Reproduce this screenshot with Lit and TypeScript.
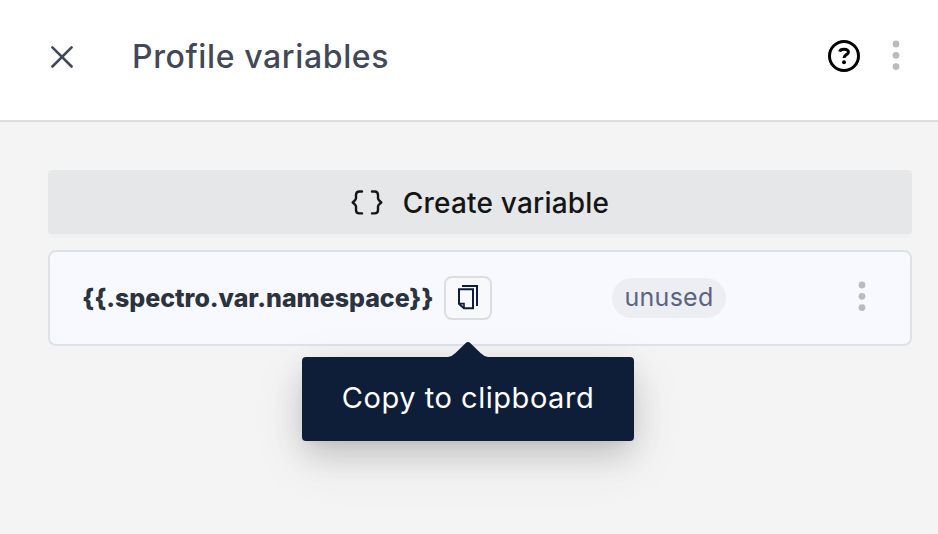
import { LitElement, html, css, svg } from "lit";
import { customElement } from "lit/decorators.js";

const dots = svg`<circle cx="5" cy="5" r="3.4"/><circle cx="5" cy="16.3" r="3.4"/><circle cx="5" cy="27.6" r="3.4"/>`;

@customElement("app-root")
export class AppRoot extends LitElement {
  static styles = css`
    :host {
      display: block;
      height: 534px;
      overflow: hidden;
      background: #f4f4f4;
      font-family: Inter, "Liberation Sans", sans-serif;
    }
    * { box-sizing: border-box; }
    svg { display: block; flex: none; overflow: visible; }
    span { white-space: nowrap; }
    header {
      display: flex;
      align-items: center;
      height: 122px;
      padding: 0 37px 8px 50px;
      background: #fff;
      border-bottom: 2px solid #dcdcdc;
    }
    h1 {
      flex: 1;
      margin: 0 0 0 57px;
      padding-top: 2px;
      color: #414857;
      font-size: 32px;
      font-weight: 500;
      line-height: 48px;
      letter-spacing: 0.62px;
      white-space: nowrap;
    }
    .more { fill: #bbb; }
    .head-more { margin-left: 31px; }
    main { padding: 48px 26px 0 48px; }
    .create {
      display: flex;
      align-items: center;
      justify-content: center;
      gap: 20px;
      width: 100%;
      height: 64px;
      padding: 0;
      border: 0;
      border-radius: 4px;
      background: #e6e7e8;
      box-shadow: 0 4px 0 rgba(0, 0, 0, 0.016);
      color: #151515;
      font: 500 28px/44px Inter, sans-serif;
      letter-spacing: 0.2px;
    }
    .create span { padding-top: 2px; }
    .row {
      display: flex;
      align-items: center;
      height: 96px;
      margin-top: 16px;
      padding: 0 43px 0 32px;
      border: 2px solid #dfe1e8;
      border-radius: 8px;
      background: #f8f9fe;
    }
    .row > .more { margin-bottom: 2px; }
    .name {
      width: 362px;
      color: #2b333e;
      font-size: 25px;
      font-weight: 800;
      line-height: 36px;
      letter-spacing: -0.03px;
    }
    .copy {
      position: relative;
      display: flex;
      align-items: center;
      justify-content: center;
      width: 48px;
      height: 44px;
      border: 2px solid #dcdedf;
      border-radius: 8px;
      background: #f8f9fb;
    }
    .tag {
      display: flex;
      justify-content: center;
      width: 114px;
      height: 40px;
      margin: 0 auto 0 120px;
      border-radius: 20px;
      background: #edeef3;
      color: #596383;
      font-size: 25px;
      line-height: 38px;
      letter-spacing: 0.3px;
    }
    .tip {
      position: absolute;
      top: 79px;
      left: 50%;
      display: flex;
      justify-content: center;
      width: 332px;
      height: 84px;
      transform: translateX(-50%);
      border-radius: 4px;
      background: #0f1e38;
      box-shadow: 0 12px 32px rgba(0, 0, 0, 0.08), 0 6px 12px -8px rgba(0, 0, 0, 0.12),
        0 18px 56px 8px rgba(0, 0, 0, 0.05), 0 16px 36px -4px rgba(0, 0, 0, 0.1);
      color: #fff;
      font-size: 29px;
      line-height: 82px;
      letter-spacing: 0.54px;
    }
    .arrow { position: absolute; top: -15px; left: 146px; }
  `;

  render() {
    return html`
      <header>
        <svg width="25" height="24" viewBox="0 0 25 24" fill="none" stroke="#414857" stroke-width="2.6" stroke-linecap="round">
          <path d="M2.4 3.3 21.6 22.5M21.6 3.3 2.4 22.5" />
        </svg>
        <h1>Profile variables</h1>
        <svg width="32" height="32" viewBox="0 0 32 32" fill="none" stroke="#000">
          <circle cx="16" cy="16" r="14.5" stroke-width="3" />
          <path d="M11.7 11.6C12.4 8.7 20.6 8.2 20.4 12.3C20.3 14.9 16 14.5 16 18" stroke-width="3" />
          <circle cx="16" cy="22.2" r="2" fill="#000" stroke="none" />
        </svg>
        <svg class="more head-more" width="10" height="34" viewBox="0 0 10 34">${dots}</svg>
      </header>
      <main>
        <button class="create">
          <svg width="32" height="26" viewBox="0 0 32 26" fill="none" stroke="#151515" stroke-width="2.4" stroke-linecap="round" stroke-linejoin="round">
            <path d="M11 2.5H8.5Q5 2.5 5 6V9.3Q5 10.8 1.7 13.5Q5 16 5 17.6V21Q5 24.4 8.5 24.4H11" />
            <path d="M21 2.5H23.5Q27 2.5 27 6V9.3Q27 10.8 30.3 13.5Q27 16 27 17.6V21Q27 24.4 23.5 24.4H21" />
          </svg>
          <span>Create variable</span>
        </button>
        <section class="row">
          <span class="name">{{.spectro.var.namespace}}</span>
          <div class="copy">
            <svg width="20" height="24" viewBox="0 0 20 24" fill="none" stroke="#0f1e38" stroke-width="2">
              <path d="M4 0H19V20" />
              <path d="M1 3.3H15V22.3H6L1 17.8Z" />
              <path d="M1 17.6H6V22.3" stroke-width="1.6" />
            </svg>
            <div class="tip">
              <svg class="arrow" width="40" height="16" viewBox="0 0 40 16" fill="#0f1e38">
                <path d="M0 16V15Q4 14.5 7.5 11L17.5 1.2Q20 -1 22.5 1.2L32.5 11Q36 14.5 40 15V16Z" />
              </svg>
              <span>Copy to clipboard</span>
            </div>
          </div>
          <span class="tag">unused</span>
          <svg class="more" width="10" height="34" viewBox="0 0 10 34">${dots}</svg>
        </section>
      </main>
    `;
  }
}
